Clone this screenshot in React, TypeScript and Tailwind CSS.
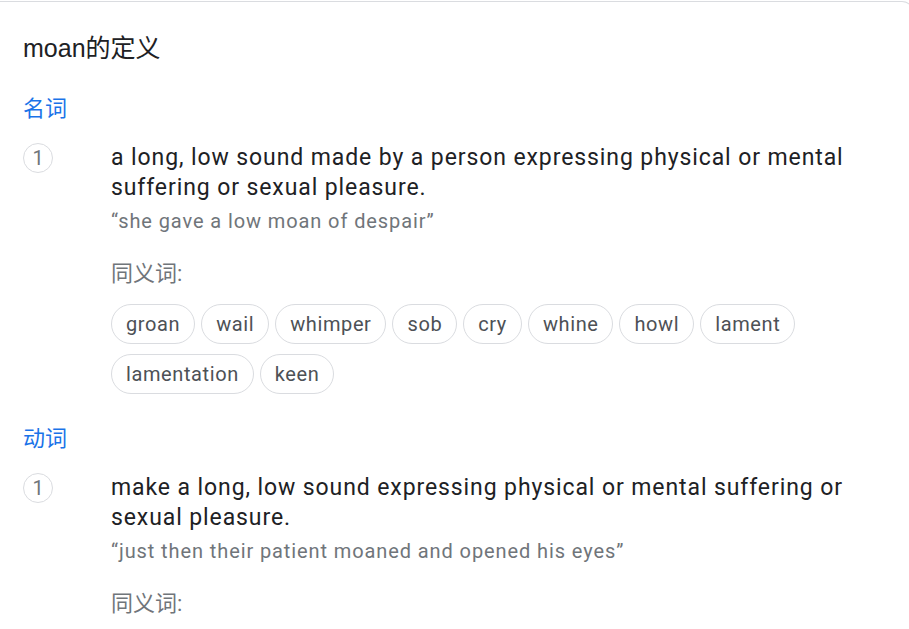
import React from 'react'

const font = { fontFamily: 'Roboto, "Noto Sans CJK SC", sans-serif' }

type Sense = {
  def: string
  example: string
  synonyms: string[]
}

const entries: { pos: string; senses: Sense[] }[] = [
  {
    pos: '名词',
    senses: [
      {
        def: 'a long, low sound made by a person expressing physical or mental suffering or sexual pleasure.',
        example: '“she gave a low moan of despair”',
        synonyms: ['groan', 'wail', 'whimper', 'sob', 'cry', 'whine', 'howl', 'lament', 'lamentation', 'keen'],
      },
    ],
  },
  {
    pos: '动词',
    senses: [
      {
        def: 'make a long, low sound expressing physical or mental suffering or sexual pleasure.',
        example: '“just then their patient moaned and opened his eyes”',
        synonyms: [],
      },
    ],
  },
]

function Chip({ label }: { label: string }) {
  return (
    <span className="h-[40px] px-[14px] flex items-center rounded-full border border-[#dadce0] text-[20px] tracking-[0.6px] text-[#4d5156]">
      {label}
    </span>
  )
}

function SenseRow({ n, sense }: { n: number; sense: Sense }) {
  return (
    <div className="flex items-start mt-[19px]">
      <div className="w-[30px] h-[30px] shrink-0 rounded-full border border-[#dadce0] flex items-center justify-center text-[20px] text-[#70757a]">
        {n}
      </div>
      <div className="ml-[58px] w-[765px]">
        <div className="text-[23px] leading-[30px] tracking-[0.9px] text-[#202124]">{sense.def}</div>
        <div className="mt-[4px] text-[20px] leading-[28px] tracking-[0.9px] text-[#70757a]">{sense.example}</div>
        <div className="mt-[24px] text-[22px] leading-[30px] text-[#70757a]">同义词:</div>
        {sense.synonyms.length > 0 && (
          <div className="mt-[15px] flex flex-wrap gap-x-[6px] gap-y-[10px]">
            {sense.synonyms.map((s) => (
              <Chip key={s} label={s} />
            ))}
          </div>
        )}
      </div>
    </div>
  )
}

export default function App() {
  return (
    <div className="w-[909px] h-[629px] overflow-hidden bg-white" style={font}>
      <div className="mt-px w-[914px] min-h-[700px] border-t border-r border-[#dadce0] rounded-tr-[12px] pl-[23px] pt-[30px]">
        <h1
          className="text-[25px] leading-[32px] text-[#202124]"
          style={{ fontFamily: '"Liberation Sans", "Noto Sans CJK SC", sans-serif' }}
        >
          moan的定义
        </h1>
        {entries.map((e) => (
          <section key={e.pos} className="mt-[30px]">
            <div className="text-[22px] leading-[30px] text-[#1a73e8]">{e.pos}</div>
            {e.senses.map((s, j) => (
              <SenseRow key={j} n={j + 1} sense={s} />
            ))}
          </section>
        ))}
      </div>
    </div>
  )
}
